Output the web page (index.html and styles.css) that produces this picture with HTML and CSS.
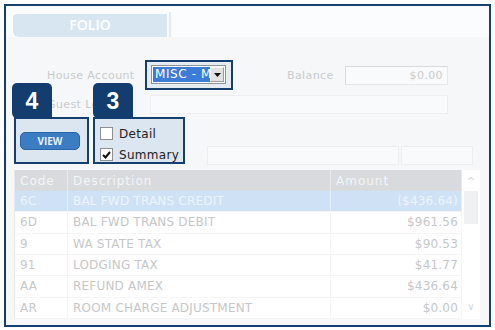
FILE: index.html
```html
<!DOCTYPE html>
<html lang="en">
<head>
    <meta charset="UTF-8">
    <title>Folio</title>
    <link rel="stylesheet" href="styles.css">
</head>
<body>
  <div class="frame">
    <div class="tabbar">
      <div class="tab">FOLIO</div>
      <div class="tab-sep"></div>
    </div>

    <div class="content">
      <div class="row row-account">
        <span class="label label-account">House Account</span>
        <div class="callout callout-select">
          <div class="select">
            <span class="select-value">MISC - M</span>
            <span class="select-btn">
              <svg width="7" height="4" viewBox="0 0 7 4"><path d="M0 0h7L3.5 4z" fill="#111"/></svg>
            </span>
          </div>
        </div>
        <span class="label label-balance">Balance</span>
        <div class="field field-balance">$0.00</div>
      </div>

      <div class="row row-guest">
        <span class="label label-guest">Guest Ledger</span>
        <div class="field field-guest"></div>
      </div>

      <div class="row row-actions">
        <div class="callout callout-view">
          <div class="badge">4</div>
          <button class="btn-view">VIEW</button>
        </div>
        <div class="callout callout-checks">
          <div class="badge">3</div>
          <label class="check"><span class="box"></span>Detail</label>
          <label class="check"><span class="box checked">
            <svg width="9" height="8" viewBox="0 0 9 8"><path d="M1 4l2.5 2.5L8 1" fill="none" stroke="#111" stroke-width="2"/></svg>
          </span>Summary</label>
        </div>
        <div class="field field-wide"></div>
        <div class="field field-small"></div>
      </div>

      <div class="grid">
        <table class="codes">
          <thead>
            <tr><th class="c-code">Code</th><th class="c-desc">Description</th><th class="c-amt">Amount</th></tr>
          </thead>
          <tbody>
            <tr class="selected"><td>6C</td><td>BAL FWD TRANS CREDIT</td><td class="num">($436.64)</td></tr>
            <tr><td>6D</td><td>BAL FWD TRANS DEBIT</td><td class="num">$961.56</td></tr>
            <tr><td>9</td><td>WA STATE TAX</td><td class="num">$90.53</td></tr>
            <tr><td>91</td><td>LODGING TAX</td><td class="num">$41.77</td></tr>
            <tr><td>AA</td><td>REFUND AMEX</td><td class="num">$436.64</td></tr>
            <tr><td>AR</td><td>ROOM CHARGE ADJUSTMENT</td><td class="num">$0.00</td></tr>
          </tbody>
        </table>
        <div class="scroll">
          <span class="arrow">&#94;</span>
          <div class="thumb"></div>
          <span class="arrow arrow-down">&#8744;</span>
        </div>
      </div>
    </div>
  </div>
</body>
</html>
```

FILE: styles.css
```css
body {
  margin: 0;
  background-color: #ffffff;
  font-family: "DejaVu Sans", Verdana, sans-serif;
}
.frame {
  box-sizing: border-box;
  width: 487px;
  height: 323px;
  margin: 4px;
  border: 2px solid #143f70;
  background-color: #f5f7f9;
  display: flex;
  flex-direction: column;
}
.tabbar {
  height: 31px;
  background-color: #fbfcfd;
  display: flex;
  align-items: flex-end;
}
.tab {
  width: 154px;
  height: 23px;
  margin-left: 7px;
  background-color: #d8e6f2;
  border-radius: 4px 0 0 6px;
  color: #ffffff;
  font-family: "Open Sans", sans-serif;
  font-size: 14px;
  font-weight: 600;
  line-height: 21px;
  text-align: center;
}
.tab-sep {
  width: 2px;
  height: 25px;
  margin-left: 2px;
  background-color: #e6e9ec;
}
.content {
  flex: 1;
  display: flex;
  flex-direction: column;
}
.row {
  display: flex;
  align-items: center;
  position: relative;
}
.label {
  font-size: 11px;
  color: #c9cbcd;
  letter-spacing: 0.4px;
}
.field {
  box-sizing: border-box;
  height: 19px;
  border: 1px solid #e6e8ea;
  border-top-color: #d8dadc;
  border-left-color: #d8dadc;
  background-color: #f9fafb;
  font-size: 11px;
  color: #c9cbcd;
  text-align: right;
  padding: 2px 4px;
  letter-spacing: 0.4px;
}
.row-account {
  margin-top: 23px;
  height: 30px;
}
.label-account {
  margin-left: 41px;
  width: 95px;
}
.callout {
  box-sizing: border-box;
  border: 2px solid #153f6f;
  background-color: #dbe6f1;
  position: relative;
}
.callout-select {
  width: 88px;
  height: 30px;
  margin-left: 3px;
  padding: 3px 0 0 4px;
  background-color: #e4ebf2;
}
.select {
  width: 75px;
  height: 19px;
  box-sizing: border-box;
  border: 1px solid #8e9195;
  background-color: #ffffff;
  display: flex;
  align-items: center;
  padding: 1px;
}
.select-value {
  flex: 1;
  height: 15px;
  background-color: #3c7bd6;
  color: #ffffff;
  font-size: 12px;
  line-height: 15px;
  padding-left: 2px;
  overflow: hidden;
  white-space: nowrap;
  letter-spacing: 0.6px;
}
.select-btn {
  width: 14px;
  height: 15px;
  box-sizing: border-box;
  background-color: #e2e2e2;
  border: 1px solid #f4f4f4;
  border-right-color: #9a9a9a;
  border-bottom-color: #9a9a9a;
  display: flex;
  align-items: center;
  justify-content: center;
}
.label-balance {
  margin-left: 54px;
  width: 58px;
}
.field-balance {
  width: 103px;
}
.row-guest {
  margin-top: 3px;
  height: 23px;
}
.label-guest {
  margin-left: 41px;
  width: 46px;
  overflow: hidden;
  white-space: nowrap;
}
.field-guest {
  width: 298px;
  margin-left: 57px;
  border-color: #eceef0;
}
.row-actions {
  margin-top: 1px;
  align-items: flex-end;
  height: 47px;
}
.badge {
  position: absolute;
  top: -36px;
  left: -2px;
  width: 40px;
  height: 35px;
  background-color: #123d6e;
  border-radius: 5px 5px 0 5px;
  color: #ffffff;
  font-family: "Liberation Sans", Arial, sans-serif;
  font-weight: bold;
  font-size: 23px;
  line-height: 36px;
  text-align: center;
}
.callout-view .badge {
  left: -4px;
}
.callout-view {
  width: 75px;
  height: 47px;
  margin-left: 8px;
  padding: 13px 0 0 4px;
}
.btn-view {
  width: 60px;
  height: 18px;
  border: 1px solid #2a67a8;
  border-radius: 5px;
  background-color: #3b7cc2;
  color: #e8f0f8;
  font-family: "Open Sans", sans-serif;
  font-weight: bold;
  font-size: 10px;
  padding: 0;
  display: block;
}
.callout-checks {
  width: 92px;
  height: 47px;
  margin-left: 4px;
  padding: 4px 0 0 5px;
}
.check {
  display: flex;
  align-items: center;
  font-size: 12px;
  color: #222222;
  height: 21px;
  letter-spacing: 0.3px;
}
.box {
  box-sizing: border-box;
  width: 13px;
  height: 13px;
  border: 1px solid #8f8f8f;
  background-color: #ffffff;
  margin-right: 6px;
  display: flex;
  align-items: center;
  justify-content: center;
}
.field-wide {
  width: 192px;
  margin-left: 22px;
  margin-bottom: -1px;
  border-color: #eceef0;
}
.field-small {
  width: 72px;
  margin-left: 2px;
  margin-bottom: -1px;
  border-color: #eceef0;
}
.grid {
  margin: 6px 0 0 8px;
  width: 465px;
  height: 149px;
  display: flex;
  background-color: #ffffff;
  border-left: 1px solid #e6e8ea;
  overflow: hidden;
}
.codes {
  width: 447px;
  border-collapse: collapse;
  font-size: 12px;
}
.codes th {
  height: 21px;
  background-color: #d8dadd;
  color: #f3f5f7;
  font-weight: normal;
  text-align: left;
  padding: 0 0 0 5px;
  border-right: 1px solid #e6e8ea;
  letter-spacing: 1px;
}
.c-code {
  width: 47px;
}
.c-amt {
  width: 125px;
}
.codes td {
  height: 20px;
  padding: 0 0 0 5px;
  color: #c5c7c9;
  border-bottom: 1px solid #f5f5f5;
  border-right: 1px solid #f5f5f5;
  white-space: nowrap;
  letter-spacing: 0.2px;
}
.codes td.num {
  text-align: right;
  padding: 0 3px 0 0;
}
.codes tr.selected td {
  background-color: #cfe2f5;
  color: #edf4fb;
  border-right-color: #e4eef9;
}
.scroll {
  width: 18px;
  background-color: #ffffff;
  display: flex;
  flex-direction: column;
  align-items: center;
}
.arrow {
  height: 21px;
  font-size: 10px;
  line-height: 24px;
  color: #d4d6d8;
}
.thumb {
  width: 14px;
  height: 33px;
  background-color: #f0f1f2;
}
.arrow-down {
  margin-top: auto;
  line-height: 18px;
}
```
